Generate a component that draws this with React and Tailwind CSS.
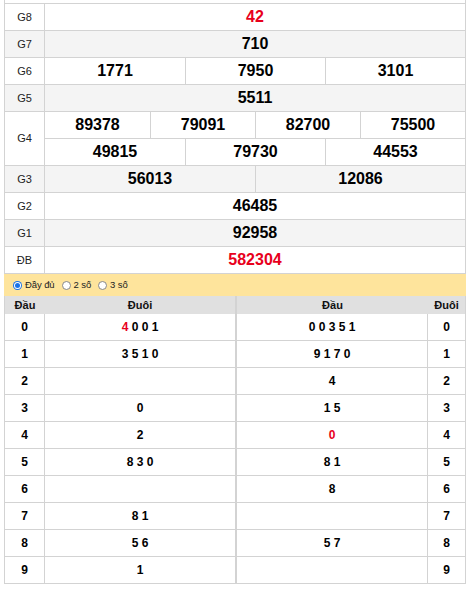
const prizes = [
  { label: "G8", lines: [["42"]], red: true, alt: false },
  { label: "G7", lines: [["710"]], alt: true },
  { label: "G6", lines: [["1771", "7950", "3101"]], alt: false },
  { label: "G5", lines: [["5511"]], alt: true },
  {
    label: "G4",
    lines: [
      ["89378", "79091", "82700", "75500"],
      ["49815", "79730", "44553"],
    ],
    alt: false,
  },
  { label: "G3", lines: [["56013", "12086"]], alt: true },
  { label: "G2", lines: [["46485"]], alt: false },
  { label: "G1", lines: [["92958"]], alt: true },
  { label: "ĐB", lines: [["582304"]], red: true, alt: false },
];

// each entry: [text, index of red digit or -1]
const leftRows = [
  ["4 0 0 1", 0],
  ["3 5 1 0", -1],
  ["", -1],
  ["0", -1],
  ["2", -1],
  ["8 3 0", -1],
  ["", -1],
  ["8 1", -1],
  ["5 6", -1],
  ["1", -1],
];

const rightRows = [
  ["0 0 3 5 1", -1],
  ["9 1 7 0", -1],
  ["4", -1],
  ["1 5", -1],
  ["0", 0],
  ["8 1", -1],
  ["8", -1],
  ["", -1],
  ["5 7", -1],
  ["", -1],
];

const cols = {
  1: "grid-cols-1",
  2: "grid-cols-2",
  3: "grid-cols-3",
  4: "grid-cols-4",
};

function Digits({ text, red }) {
  if (red < 0) return <span>{text}</span>;
  return (
    <span>
      <span className="text-[#e8001c]">{text[red]}</span>
      {text.slice(red + 1)}
    </span>
  );
}

function PrizeRow({ p }) {
  const bg = p.alt ? "bg-[#f4f4f4]" : "bg-white";
  return (
    <div className={`flex border-b border-[#d3d3d3] ${bg}`}>
      <div className="w-[40px] border-r border-[#d3d3d3] flex items-center justify-center text-[11px] text-[#222]">
        {p.label}
      </div>
      <div className="flex-1 flex flex-col">
        {p.lines.map((line, i) => (
          <div
            key={i}
            className={`grid ${cols[line.length]} ${
              i < p.lines.length - 1 ? "h-[27px] border-b border-[#d3d3d3]" : "h-[26px]"
            }`}
          >
            {line.map((n, j) => (
              <div
                key={j}
                className={`flex items-center justify-center text-[16px] font-bold ${
                  j > 0 ? "border-l border-[#d3d3d3]" : ""
                } ${p.red ? "text-[#e8001c]" : "text-black"}`}
              >
                {n}
              </div>
            ))}
          </div>
        ))}
      </div>
    </div>
  );
}

function Radio({ checked, label }) {
  return (
    <div className="flex items-center gap-[3px]">
      {checked ? (
        <span className="w-[9px] h-[9px] rounded-full bg-[#1a73e8] flex items-center justify-center">
          <span className="w-[7px] h-[7px] rounded-full bg-white flex items-center justify-center">
            <span className="w-[5px] h-[5px] rounded-full bg-[#1a73e8]"></span>
          </span>
        </span>
      ) : (
        <span className="w-[9px] h-[9px] rounded-full border border-[#888] bg-white"></span>
      )}
      <span>{label}</span>
    </div>
  );
}

export default function App() {
  return (
    <div className="min-h-screen bg-white font-['Liberation_Sans',Arial,sans-serif] pl-[4px]">
      <div className="w-[462px]">
        {/* PRIZE TABLE */}
        <div className="h-[3px] border-x border-[#d3d3d3]"></div>
        <div className="border-x border-t border-[#d3d3d3]">
          {prizes.map((p) => (
            <PrizeRow key={p.label} p={p} />
          ))}
        </div>

        {/* FILTER BAR */}
        <div className="h-[22px] bg-[#fee49c] flex items-center gap-[7px] pl-[9px] text-[9.5px] tracking-[-0.1px] text-[#222]">
          <Radio checked label="Đầy đủ" />
          <Radio label="2 số" />
          <Radio label="3 số" />
        </div>

        {/* LOTO TABLES */}
        <div className="flex">
          <div className="w-[232px] border-x border-[#d3d3d3]">
            <div className="h-[18px] flex bg-[#e0e0e0] text-[11px] font-bold text-[#111]">
              <div className="w-[40px] flex items-center justify-center">Đầu</div>
              <div className="flex-1 flex items-center justify-center">Đuôi</div>
            </div>
            {leftRows.map(([t, r], i) => (
              <div key={i} className="h-[27px] flex border-b border-[#d3d3d3] text-[12px] font-bold text-black">
                <div className="w-[40px] border-r border-[#d3d3d3] flex items-center justify-center">{i}</div>
                <div className="flex-1 flex items-center justify-center whitespace-pre">
                  <Digits text={t} red={r} />
                </div>
              </div>
            ))}
          </div>
          <div className="w-[230px] border-x border-[#d3d3d3]">
            <div className="h-[18px] flex bg-[#e0e0e0] text-[11px] font-bold text-[#111]">
              <div className="w-[191px] flex items-center justify-center">Đầu</div>
              <div className="flex-1 flex items-center justify-center">Đuôi</div>
            </div>
            {rightRows.map(([t, r], i) => (
              <div key={i} className="h-[27px] flex border-b border-[#d3d3d3] text-[12px] font-bold text-black">
                <div className="w-[191px] border-r border-[#d3d3d3] flex items-center justify-center whitespace-pre">
                  <Digits text={t} red={r} />
                </div>
                <div className="flex-1 flex items-center justify-center">{i}</div>
              </div>
            ))}
          </div>
        </div>
      </div>
    </div>
  );
}
